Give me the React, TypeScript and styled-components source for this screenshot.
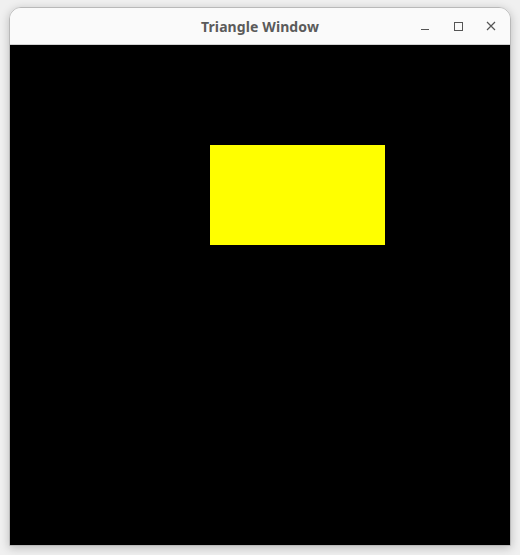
import React from "react";
import styled, { createGlobalStyle } from "styled-components";

const Global = createGlobalStyle`
  html, body { margin: 0; padding: 0; }
  body {
    background: #f0f0f0;
    width: 520px;
    height: 555px;
    overflow: hidden;
    font-family: "Noto Sans", "DejaVu Sans", sans-serif;
  }
`;

const Desktop = styled.div`
  width: 520px;
  height: 555px;
  padding: 7px 0 0 9px;
  box-sizing: border-box;
`;

const Window = styled.div`
  width: 502px;
  display: flex;
  flex-direction: column;
  border: 1px solid #b9b9b9;
  border-radius: 12px 12px 0 0;
  overflow: hidden;
  box-shadow: 0 2px 10px rgba(0, 0, 0, 0.22);
  box-sizing: border-box;
`;

const TitleBar = styled.div`
  height: 36px;
  background: #fafafa;
  border-bottom: 1px solid #d2d2d2;
  display: grid;
  grid-template-columns: 1fr auto 1fr;
  align-items: center;
`;

const Title = styled.div`
  grid-column: 2;
  font-size: 14px;
  font-weight: 700;
  color: #5b5b5b;
  letter-spacing: 0.1px;
`;

const Controls = styled.div`
  grid-column: 3;
  justify-self: end;
  display: flex;
  align-items: center;
  gap: 11px;
  padding-right: 8px;
`;

const ControlButton = styled.div`
  width: 22px;
  height: 22px;
  display: flex;
  align-items: center;
  justify-content: center;
  color: #555;
`;

const Canvas = styled.div`
  width: 500px;
  height: 500px;
  background: #000;
  display: flex;
  padding: 100px 0 0 200px;
  box-sizing: border-box;
`;

const Rect = styled.div`
  width: 175px;
  height: 100px;
  background: #ffff00;
`;

export default function App() {
  return (
    <>
      <Global />
      <Desktop>
        <Window>
          <TitleBar>
            <Title>Triangle Window</Title>
            <Controls>
              <ControlButton>
                <svg width="12" height="12" viewBox="0 0 12 12">
                  <line x1="2" y1="9.5" x2="10" y2="9.5" stroke="#555" strokeWidth="1" />
                </svg>
              </ControlButton>
              <ControlButton>
                <svg width="12" height="12" viewBox="0 0 12 12">
                  <rect x="2.5" y="2.5" width="8" height="8" fill="none" stroke="#555" strokeWidth="1" />
                </svg>
              </ControlButton>
              <ControlButton>
                <svg width="12" height="12" viewBox="0 0 12 12">
                  <path d="M2 2 L10 10 M10 2 L2 10" stroke="#555" strokeWidth="1.2" />
                </svg>
              </ControlButton>
            </Controls>
          </TitleBar>
          <Canvas>
            <Rect />
          </Canvas>
        </Window>
      </Desktop>
    </>
  );
}
